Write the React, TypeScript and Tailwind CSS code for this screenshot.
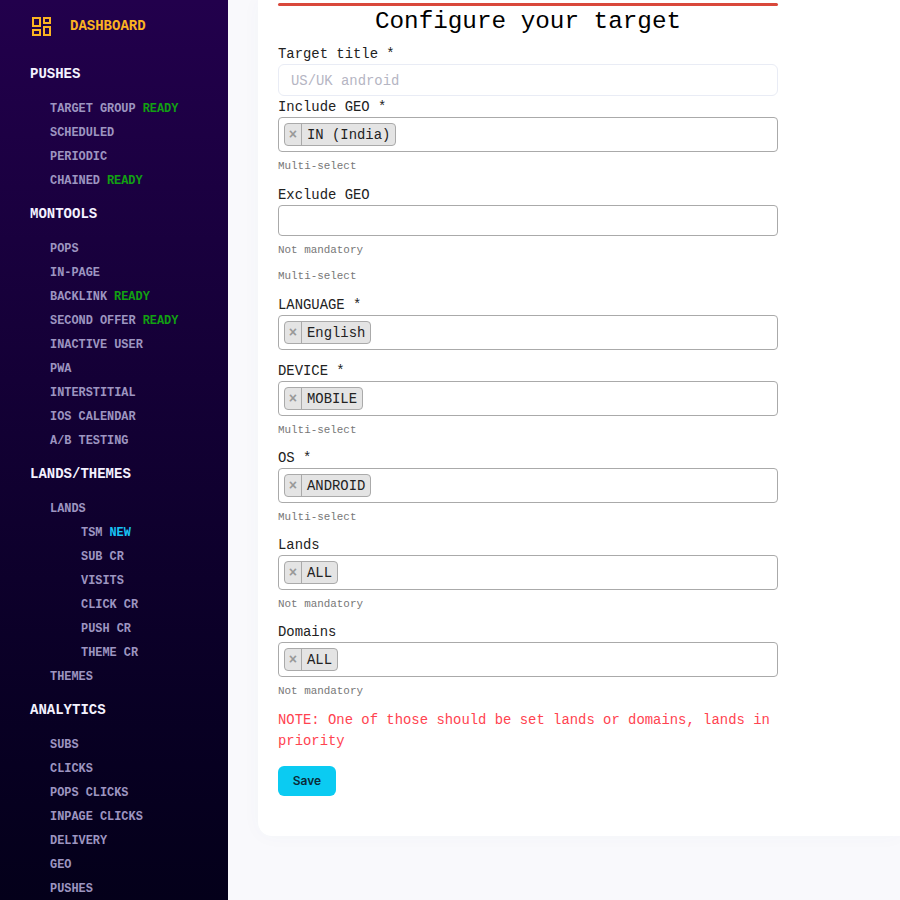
import type { FC } from "react";

const mono = "font-['Liberation_Mono',monospace]";

const navGroups = [
  {
    title: "PUSHES",
    items: [
      { label: "TARGET GROUP", badge: "READY" },
      { label: "SCHEDULED" },
      { label: "PERIODIC" },
      { label: "CHAINED", badge: "READY" },
    ],
  },
  {
    title: "MONTOOLS",
    items: [
      { label: "POPS" },
      { label: "IN-PAGE" },
      { label: "BACKLINK", badge: "READY" },
      { label: "SECOND OFFER", badge: "READY" },
      { label: "INACTIVE USER" },
      { label: "PWA" },
      { label: "INTERSTITIAL" },
      { label: "IOS CALENDAR" },
      { label: "A/B TESTING" },
    ],
  },
  {
    title: "LANDS/THEMES",
    items: [
      { label: "LANDS" },
      { label: "TSM", badge: "NEW", sub: true },
      { label: "SUB CR", sub: true },
      { label: "VISITS", sub: true },
      { label: "CLICK CR", sub: true },
      { label: "PUSH CR", sub: true },
      { label: "THEME CR", sub: true },
      { label: "THEMES" },
    ],
  },
  {
    title: "ANALYTICS",
    items: [
      { label: "SUBS" },
      { label: "CLICKS" },
      { label: "POPS CLICKS" },
      { label: "INPAGE CLICKS" },
      { label: "DELIVERY" },
      { label: "GEO" },
      { label: "PUSHES" },
    ],
  },
];

const fields = [
  { label: "Include GEO *", tag: "IN (India)", help: ["Multi-select"], gap: "mb-[10px]" },
  { label: "Exclude GEO", help: ["Not mandatory", "Multi-select"], gap: "mb-[10px]" },
  { label: "LANGUAGE *", tag: "English", gap: "mb-[10px]" },
  { label: "DEVICE *", tag: "MOBILE", help: ["Multi-select"], gap: "mb-[9px]" },
  { label: "OS *", tag: "ANDROID", help: ["Multi-select"], gap: "mb-[9px]" },
  { label: "Lands", tag: "ALL", help: ["Not mandatory"], gap: "mb-[9px]" },
  { label: "Domains", tag: "ALL", help: ["Not mandatory"], gap: "mb-[9px]" },
];

const DashboardIcon = () => (
  <svg width="20" height="19" viewBox="0 0 20 19" fill="none" stroke="#fbb321" strokeWidth="2">
    <rect x="1" y="1" width="7" height="8" />
    <rect x="12" y="1" width="6" height="5" />
    <rect x="1" y="13" width="7" height="5" />
    <rect x="12" y="10" width="6" height="8" />
  </svg>
);

const Sidebar: FC = () => (
  <aside className="w-[228px] h-[900px] shrink-0 overflow-hidden bg-gradient-to-b from-[#22004c] to-[#04001a]">
    <div className="flex items-center pl-[32px] pt-[8px] h-[36px] box-content">
      <DashboardIcon />
      <span className="ml-[18px] text-[14px] font-bold text-[#fbb321]">DASHBOARD</span>
    </div>
    {navGroups.map((group, i) => (
      <div key={group.title} className={i === 0 ? "mt-[15px]" : "mt-[7px]"}>
        <div className="pl-[30px] h-[30px] leading-[30px] text-[14px] font-bold text-[#f4f2ff]">{group.title}</div>
        <ul className="mt-[7px]">
          {group.items.map((item) => (
            <li
              key={item.label}
              className={`h-[24px] leading-[26px] text-[11.9px] font-bold text-[#9d95c0] ${item.sub ? "pl-[81px]" : "pl-[50px]"}`}
            >
              {item.label}
              {item.badge && (
                <span className={`ml-[7px] ${item.badge === "NEW" ? "text-[#17c3f5]" : "text-[#12a012]"}`}>
                  {item.badge}
                </span>
              )}
            </li>
          ))}
        </ul>
      </div>
    ))}
  </aside>
);

const Tag: FC<{ text: string }> = ({ text }) => (
  <span className="inline-flex h-[23px] items-center rounded-[4px] border border-[#aaaaaa] bg-[#e4e4e4] text-[13.9px] text-[#222222]">
    <span className="flex h-full w-[17px] items-center justify-center border-r border-[#aaaaaa] pt-[2px] font-bold text-[#999999]">
      ×
    </span>
    <span className="px-[5px] pt-[2px]">{text}</span>
  </span>
);

const SelectField: FC<{ label: string; tag?: string; help?: string[]; gap: string }> = ({ label, tag, help, gap }) => (
  <div className={gap}>
    <label className="block h-[21px] leading-[23px] text-[13.9px] text-[#222222]">{label}</label>
    <div
      className={`flex items-center rounded-[4px] border border-[#aaaaaa] bg-white pl-[5px] ${tag ? "h-[35px]" : "h-[31px]"}`}
    >
      {tag && <Tag text={tag} />}
    </div>
    {help?.map((h, i) => (
      <p key={h} className={`h-[16px] leading-[16px] text-[10.9px] text-[#777777] ${i === 0 ? "mt-[6px]" : "mt-[10px]"}`}>
        {h}
      </p>
    ))}
  </div>
);

const TargetForm: FC = () => (
  <div className="w-[500px]">
    <div className="mt-[3px] h-[3px] rounded-full bg-[#d9483b]" />
    <h1 className="h-[30px] leading-[32px] text-center text-[24.3px] text-black">Configure your target</h1>
    <div className="mt-[7px]">
      <label className="block h-[21px] leading-[23px] text-[13.9px] text-[#222222]">Target title *</label>
      <input
        placeholder="US/UK android"
        className="block h-[32px] w-full rounded-[6px] border border-[#e9ecf5] bg-white px-[12px] pt-[2px] text-[13.9px] placeholder:text-[#b5b5c3] outline-none"
      />
    </div>
    <div className="mt-0">
      {fields.map((f) => (
        <SelectField key={f.label} label={f.label} tag={f.tag} help={f.help} gap={f.gap} />
      ))}
    </div>
    <p className="mt-[11px] text-[13.9px] leading-[21px] text-[#ff4350]">
      NOTE: One of those should be set lands or domains, lands in priority
    </p>
    <button className="mt-[14px] block h-[30px] w-[58px] rounded-[6px] bg-[#0bcbf2] font-['Inter',sans-serif] text-[12px] font-semibold text-[#0b2b38]">
      Save
    </button>
  </div>
);

export default function App() {
  return (
    <div className={`flex h-[900px] w-[900px] overflow-hidden bg-[#f9f9fc] ${mono}`}>
      <Sidebar />
      <main className="ml-[30px] h-[836px] flex-1 rounded-bl-[14px] bg-white pl-[20px] shadow-[0_0_20px_rgba(76,87,125,0.03)]">
        <TargetForm />
      </main>
    </div>
  );
}
